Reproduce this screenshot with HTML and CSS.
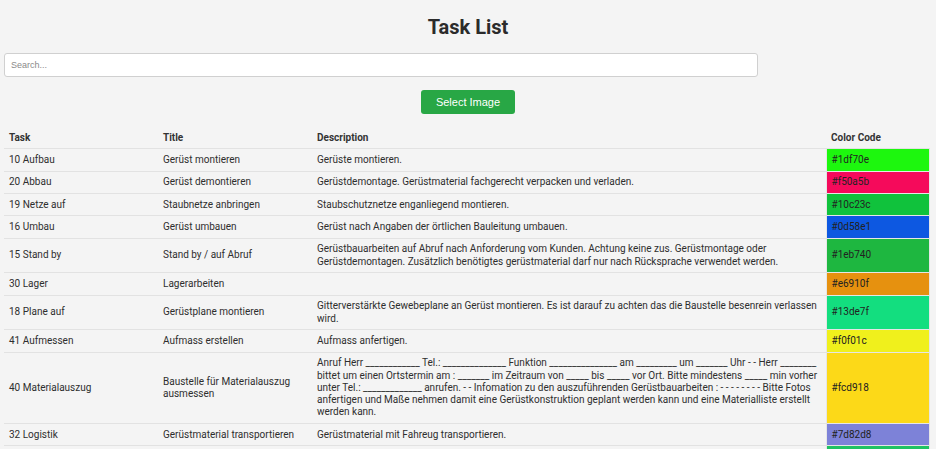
FILE: index.html
```html
<!DOCTYPE html>
<html lang="de">
<head>
<meta charset="utf-8">
<title>Task List</title>
<link rel="stylesheet" href="styles.css">
</head>
<body>
<div class="page">
  <h1 class="title">Task List</h1>
  <input class="search" type="text" placeholder="Search...">
  <div class="actions">
    <button class="btn" type="button">Select Image</button>
  </div>
  <table class="tasks">
    <colgroup>
      <col class="c-task"><col class="c-title"><col class="c-desc"><col class="c-color">
    </colgroup>
    <thead>
      <tr><th>Task</th><th>Title</th><th>Description</th><th>Color Code</th></tr>
    </thead>
    <tbody>
      <tr><td>10 Aufbau</td><td>Gerüst montieren</td><td>Gerüste montieren.</td><td class="color" style="background:#1df70e">#1df70e</td></tr>
      <tr><td>20 Abbau</td><td>Gerüst demontieren</td><td>Gerüstdemontage. Gerüstmaterial fachgerecht verpacken und verladen.</td><td class="color" style="background:#f50a5b">#f50a5b</td></tr>
      <tr><td>19 Netze auf</td><td>Staubnetze anbringen</td><td>Staubschutznetze enganliegend montieren.</td><td class="color" style="background:#10c23c">#10c23c</td></tr>
      <tr><td>16 Umbau</td><td>Gerüst umbauen</td><td>Gerüst nach Angaben der örtlichen Bauleitung umbauen.</td><td class="color" style="background:#0d58e1">#0d58e1</td></tr>
      <tr><td>15 Stand by</td><td>Stand by / auf Abruf</td><td>Gerüstbauarbeiten auf Abruf nach Anforderung vom Kunden. Achtung keine zus. Gerüstmontage oder Gerüstdemontagen. Zusätzlich benötigtes gerüstmaterial darf nur nach Rücksprache verwendet werden.</td><td class="color" style="background:#1eb740">#1eb740</td></tr>
      <tr><td>30 Lager</td><td>Lagerarbeiten</td><td></td><td class="color" style="background:#e6910f">#e6910f</td></tr>
      <tr><td>18 Plane auf</td><td>Gerüstplane montieren</td><td>Gitterverstärkte Gewebeplane an Gerüst montieren. Es ist darauf zu achten das die Baustelle besenrein verlassen wird.</td><td class="color" style="background:#13de7f">#13de7f</td></tr>
      <tr><td>41 Aufmessen</td><td>Aufmass erstellen</td><td>Aufmass anfertigen.</td><td class="color" style="background:#f0f01c">#f0f01c</td></tr>
      <tr><td>40 Materialauszug</td><td>Baustelle für Materialauszug ausmessen</td><td>Anruf Herr ____________ Tel.: ______________ Funktion _______________ am _________ um _______ Uhr - - Herr ________ bittet um einen Ortstermin am : _______ im Zeitraum von _____ bis _____ vor Ort. Bitte mindestens _____ min vorher unter Tel.: _____________ anrufen. - - Infomation zu den auszuführenden Gerüstbauarbeiten : - - - - - - - - Bitte Fotos anfertigen und Maße nehmen damit eine Gerüstkonstruktion geplant werden kann und eine Materialliste erstellt werden kann.</td><td class="color" style="background:#fcd918">#fcd918</td></tr>
      <tr><td>32 Logistik</td><td>Gerüstmaterial transportieren</td><td>Gerüstmaterial mit Fahreug transportieren.</td><td class="color" style="background:#7d82d8">#7d82d8</td></tr>
      <tr><td>50 Sonstiges</td><td>Sonstige Arbeiten</td><td>Sonstige Arbeiten nach Absprache.</td><td class="color" style="background:#1fc263">#1fc263</td></tr>
    </tbody>
  </table>
</div>
</body>
</html>
```

FILE: styles.css
```css
html {
  overflow: hidden;
}

body {
  margin: 0;
  background: #f4f4f4;
  font-family: Roboto, "Liberation Sans", sans-serif;
  color: #333;
}

.page {
  padding: 0 4px;
}

.title {
  margin: 14px 0 13px;
  font-size: 20px;
  font-weight: 700;
  line-height: 26px;
  text-align: center;
  color: #2b2b2b;
}

.search {
  display: block;
  box-sizing: border-box;
  width: 754px;
  height: 24px;
  margin: 0;
  padding: 0 6px;
  border: 1px solid #d0d0d0;
  border-radius: 3px;
  background: #fff;
  font-family: "Liberation Sans", Arial, sans-serif;
  font-size: 9px;
  color: #333;
}

.search::placeholder {
  color: #8a8a8a;
}

.actions {
  display: flex;
  justify-content: center;
  margin: 13px 0 14px;
}

.btn {
  width: 94px;
  height: 24px;
  border: none;
  border-radius: 3px;
  background: #28a745;
  color: #fff;
  font-family: "Liberation Sans", Arial, sans-serif;
  font-size: 11px;
  cursor: pointer;
}

.tasks {
  width: 925px;
  border-collapse: collapse;
  table-layout: fixed;
  font-size: 10px;
  line-height: 12.2px;
}

.c-task { width: 154px; }
.c-title { width: 154px; }
.c-desc { width: 514px; }
.c-color { width: 103px; }

.tasks th,
.tasks td {
  padding: 4.6px 5px;
  text-align: left;
  vertical-align: middle;
  border-bottom: 1px solid #e2e2e2;
}

.tasks th {
  font-weight: 700;
  color: #333;
  padding-top: 4px;
  padding-bottom: 4px;
}

.tasks td {
  color: #2e2e2e;
}

.tasks td.color {
  border: 1px solid #e6e6e6;
  color: #222;
}
```
